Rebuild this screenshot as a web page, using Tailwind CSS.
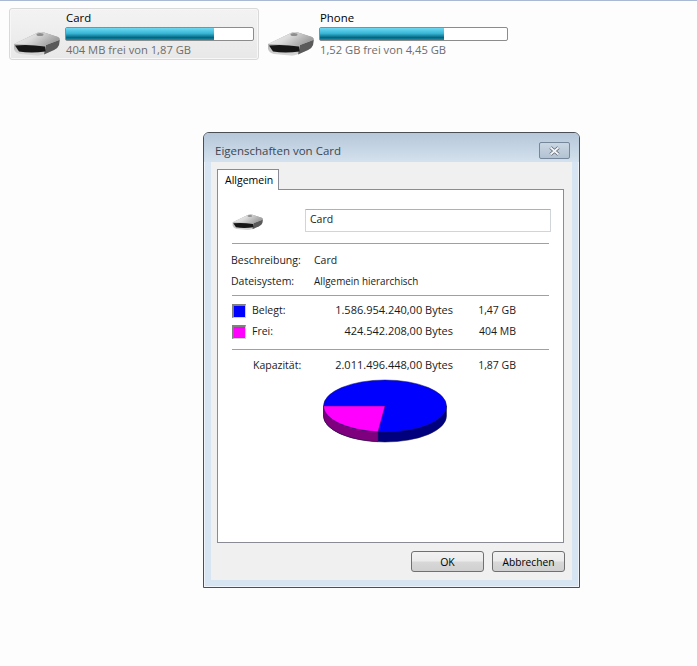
<!DOCTYPE html>
<html lang="de">
<head>
    <meta charset="UTF-8">
    <title>Eigenschaften von Card</title>
    <script src="https://cdn.jsdelivr.net/npm/@tailwindcss/browser@4"></script>
</head>
<body class="relative h-[666px] w-[697px] overflow-hidden bg-[#fdfdfd] font-['Open_Sans','Noto_Sans',sans-serif] text-black">
    <svg width="0" height="0" class="absolute">
        <defs>
            <linearGradient id="driveTop" x1="0" y1="0" x2="1" y2="0.4">
                <stop offset="0" stop-color="#f2f2f2"/>
                <stop offset="0.5" stop-color="#dcdcdc"/>
                <stop offset="1" stop-color="#a0a0a0"/>
            </linearGradient>
            <linearGradient id="driveBody" x1="0" y1="0" x2="0" y2="1">
                <stop offset="0" stop-color="#8a8a8a"/>
                <stop offset="1" stop-color="#d8d8d8"/>
            </linearGradient>
            <symbol id="drive" viewBox="0 0 47 25">
                <path d="M1 13 L24 2 Q27 .5 31 1.500 L45 6 Q47 7 47 9 L46 14 Q45 17 41 19 L30 23.500 Q27 25 23 24.500 L7 23 Q2 22 1 18 Z" fill="url(#driveBody)"/>
                <path d="M33 14 L46.500 9 L46 14 Q45 17 41 19 L31 23.500 Z" fill="#5a5a5a"/>
                <path d="M1 13 L24 2 Q27 .5 31 1.500 L45 6 Q47 7 46 9 L33 14 Q31 15 27 14.500 L4 13 Z" fill="url(#driveTop)"/>
                <path d="M2 14.500 Q15 13 32 15.500 L32.500 20.500 Q18 22.500 6 20.500 Z" fill="#161616"/>
                <ellipse cx="27" cy="3.500" rx="3.500" ry="1.500" fill="#8e8e8e"/>
            </symbol>
        </defs>
    </svg>

    <div class="h-px bg-[#a9b9d3]"></div>

    <!-- drives -->
    <div class="flex gap-1 pl-[9px] pt-[7px]">
        <div class="flex h-[52px] w-[250px] rounded-[3px] border border-[#d9d9d9] bg-gradient-to-b from-[#f3f3f3] to-[#e8e8e8] pl-[3px] shadow-[inset_0_0_0_1px_#f7f7f7]">
            <svg class="mt-[22px] h-[25px] w-[47px] shrink-0"><use href="#drive"/></svg>
            <div class="ml-[5px] w-[190px]">
                <div class="h-[18px] pl-[1px] text-[11.4px] leading-[17px]">Card</div>
                <div class="h-[14px] w-[189px] rounded-[2px] border border-[#8c8c8c] bg-white">
                    <div class="h-full w-[148px] bg-[linear-gradient(#6fd8f2,#38b6d6_45%,#04647f_80%,#1d92ad)]"></div>
                </div>
                <div class="mt-[1px] pl-[1px] text-[11.2px] leading-[16px] text-[#6d6d6d]">404 MB frei von 1,87 GB</div>
            </div>
        </div>
        <div class="flex h-[52px] w-[250px] border border-transparent pl-[3px]">
            <svg class="mt-[22px] h-[25px] w-[47px] shrink-0"><use href="#drive"/></svg>
            <div class="ml-[5px] w-[190px]">
                <div class="h-[18px] pl-[1px] text-[11.4px] leading-[17px]">Phone</div>
                <div class="h-[14px] w-[189px] rounded-[2px] border border-[#8c8c8c] bg-white">
                    <div class="h-full w-[124px] bg-[linear-gradient(#6fd8f2,#38b6d6_45%,#04647f_80%,#1d92ad)]"></div>
                </div>
                <div class="mt-[1px] pl-[1px] text-[11.2px] leading-[16px] text-[#6d6d6d]">1,52 GB frei von 4,45 GB</div>
            </div>
        </div>
    </div>

    <!-- properties dialog -->
    <div class="absolute left-[203px] top-[132px] flex h-[456px] w-[377px] flex-col rounded-t-[6px] border border-[#4a4f57] bg-[#d7e4f1] shadow-[inset_0_0_0_1px_#eef4fa]">
        <div class="flex h-[29px] shrink-0 items-center justify-between rounded-t-[5px] bg-gradient-to-b from-[#b5c7d9] to-[#d4e1ee] pl-[11px] pr-[9px] pt-[6px]">
            <span class="text-[11.5px] leading-[16px] text-[#3d4650]">Eigenschaften von Card</span>
            <div class="flex h-[17px] w-[31px] items-center justify-center rounded-[2px] border border-[#77879b] bg-gradient-to-b from-[#cad7e3] to-[#b3c2d2]">
                <svg width="11" height="10" viewBox="0 0 11 10"><path d="M1.500 1.500 L9.500 8.500 M9.500 1.500 L1.500 8.500" stroke="#5d6875" stroke-width="3.400"/><path d="M1.500 1.500 L9.500 8.500 M9.500 1.500 L1.500 8.500" stroke="#f4f6f8" stroke-width="1.800"/></svg>
            </div>
        </div>

        <div class="mx-[7px] flex h-[418px] flex-col bg-[#f0f0f0] px-[6px] pt-[7px]">
            <div class="relative z-10 -mb-px h-[21px] w-[62px] border border-b-0 border-[#898c95] bg-white pl-[7px] text-[10.5px] leading-[20px]">Allgemein</div>

            <div class="h-[354px] w-[347px] border border-[#898c95] bg-white text-[10.5px] text-[#1a1a1a]">
                <div class="flex h-[53px] items-start pl-[14px] pt-[19px]">
                    <svg class="mt-[4px] h-[18px] w-[31px] shrink-0"><use href="#drive"/></svg>
                    <div class="ml-[42px] h-[23px] w-[246px] rounded-[1px] border border-[#d0d5da] border-t-[#adb2b8] pl-[4px] leading-[18px]">Card</div>
                </div>
                <div class="ml-[14px] h-px w-[317px] bg-[#a0a0a0]"></div>

                <div class="flex h-[25px] items-end pl-[13px]"><span class="w-[83px]">Beschreibung:</span><span>Card</span></div>
                <div class="flex h-[21px] items-baseline pl-[13px] pt-[5px]"><span class="w-[83px]">Dateisystem:</span><span class="text-[9.9px]">Allgemein hierarchisch</span></div>

                <div class="ml-[14px] mt-[5px] h-px w-[317px] bg-[#a0a0a0]"></div>

                <div class="mt-[8px] flex h-[14px] items-center pl-[14px]">
                    <div class="h-[14px] w-[14px] border-t-2 border-l-2 border-r border-b border-t-[#808080] border-l-[#808080] border-r-[#d0d0d0] border-b-[#d0d0d0] bg-[#0000ff]"></div>
                    <div class="flex self-start items-baseline leading-[12px]">
                        <span class="ml-[6px] w-[56px]">Belegt:</span>
                        <span class="w-[145px] text-right text-[11px] leading-[12px]">1.586.954.240,00 Bytes</span>
                        <span class="w-[63px] text-right">1,47 GB</span>
                    </div>
                </div>
                <div class="mt-[7px] flex h-[14px] items-center pl-[14px]">
                    <div class="h-[14px] w-[14px] border-t-2 border-l-2 border-r border-b border-t-[#808080] border-l-[#808080] border-r-[#d0d0d0] border-b-[#d0d0d0] bg-[#ff00ff]"></div>
                    <div class="flex self-start items-baseline leading-[12px]">
                        <span class="ml-[6px] w-[56px]">Frei:</span>
                        <span class="w-[145px] text-right text-[11px] leading-[12px]">424.542.208,00 Bytes</span>
                        <span class="w-[63px] text-right">404 MB</span>
                    </div>
                </div>

                <div class="ml-[14px] mt-[10px] h-px w-[317px] bg-[#a0a0a0]"></div>

                <div class="mt-[9px] flex h-[14px] items-baseline pl-[35px] leading-[12px]">
                    <span class="w-[55px]">Kapazität:</span>
                    <span class="w-[145px] text-right text-[11px] leading-[12px]">2.011.496.448,00 Bytes</span>
                    <span class="w-[63px] text-right">1,87 GB</span>
                </div>

                <svg class="ml-[105px] mt-[6px] block" width="125" height="65" viewBox="0 0 125 65">
                    <path d="M.5 27 V37 A61.500 26 0 0 0 123.500 37 V27 Z" fill="#00007f" stroke="#1a1a40" stroke-width=".5"/>
                    <path d="M.5 27 V37 A61.500 26 0 0 0 55 62.600 V52.600 A61.500 26 0 0 1 .5 27 Z" fill="#7f007f" stroke="#3a103a" stroke-width=".5"/>
                    <ellipse cx="62" cy="27" rx="61.500" ry="26" fill="#0000ff" stroke="#1a1a55" stroke-width=".5"/>
                    <path d="M62 27 H.5 A61.500 26 0 0 0 55 52.800 Z" fill="#ff00ff" stroke="#501050" stroke-width=".5"/>
                </svg>
            </div>

            <div class="mr-[1px] mt-[8px] flex justify-end gap-2">
                <div class="h-[21px] w-[73px] rounded-[3px] border border-[#707070] bg-[linear-gradient(#f2f2f2,#ebebeb_48%,#d8d8d8_52%,#cfcfcf)] text-center text-[10.5px] leading-[20px]">OK</div>
                <div class="h-[21px] w-[73px] rounded-[3px] border border-[#707070] bg-[linear-gradient(#f2f2f2,#ebebeb_48%,#d8d8d8_52%,#cfcfcf)] text-center text-[10.2px] leading-[20px]">Abbrechen</div>
            </div>
        </div>
    </div>
</body>
</html>
